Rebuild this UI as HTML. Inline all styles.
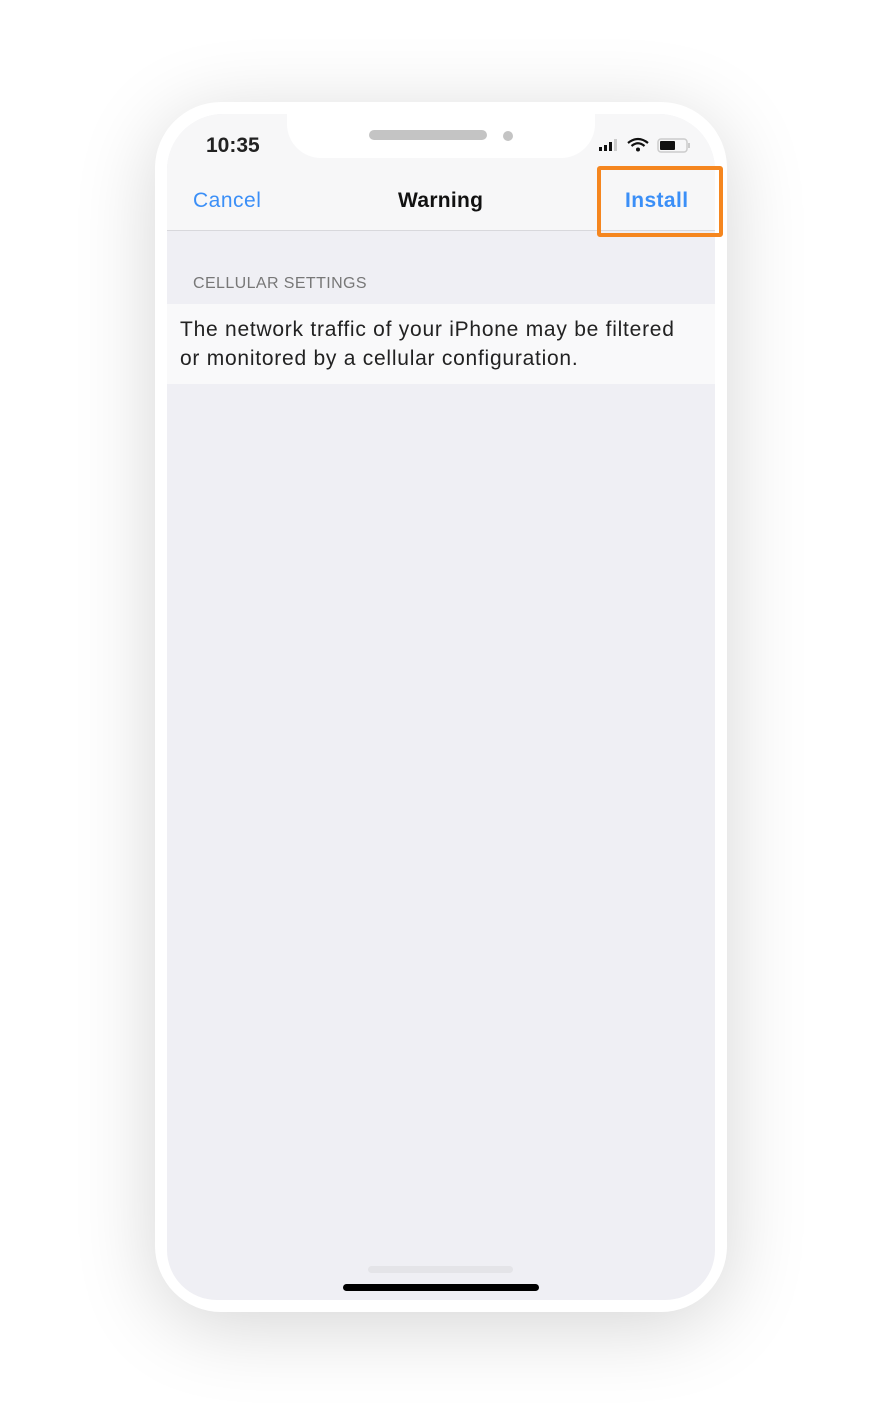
<!DOCTYPE html>
<html><head><style>
body{margin:0;width:882px;height:1410px;background:#fff;position:relative;overflow:hidden;font-family:"Liberation Sans",sans-serif}
.shadow{position:absolute;left:155px;top:102px;width:572px;height:1210px;border-radius:70px;box-shadow:0 14px 80px rgba(0,0,0,0.17)}
.phone{position:absolute;left:155px;top:102px;width:572px;height:1210px;border-radius:66px;background:#fff}
.screen{position:absolute;left:167px;top:114px;width:548px;height:1186px;border-radius:56px 56px 50px 50px;background:#efeff4;overflow:hidden}
.top{position:absolute;left:0;top:0;width:548px;height:116px;background:#f7f7f8;border-bottom:1px solid #d8d8dc}
.notch{position:absolute;left:120px;top:-2px;width:308px;height:46px;background:#fff;border-radius:0 0 34px 34px}
.t{position:absolute;white-space:nowrap}
</style></head><body>
<div class="shadow"></div>
<div class="phone"></div>
<div class="screen">
 <div class="top">
  <div class="notch"></div>
  <div style="position:absolute;left:202px;top:16px;width:118px;height:10px;border-radius:5px;background:#c4c4c4"></div>
  <div style="position:absolute;left:336px;top:17px;width:10px;height:10px;border-radius:5px;background:#c4c4c4"></div>
  <div class="t" style="left:39px;top:20px;font-size:21px;font-weight:bold;color:#222">10:35</div>
  <svg style="position:absolute;left:432px;top:23px" width="96" height="16" viewBox="0 0 96 16">
   <rect x="0" y="10" width="3" height="4" fill="#111"/><rect x="5" y="8" width="3" height="6" fill="#111"/><rect x="10" y="5" width="3" height="9" fill="#111"/><rect x="15" y="2" width="3" height="12" fill="#ccc"/>
   <path d="M29 6 Q39 -2 49 6" stroke="#111" stroke-width="2.2" fill="none"/><path d="M32.5 9 Q39 3.5 45.5 9" stroke="#111" stroke-width="2.2" fill="none"/><circle cx="39" cy="12.5" r="2" fill="#111"/>
   <rect x="59" y="2" width="29" height="13" rx="3" fill="none" stroke="#ccc" stroke-width="1.5"/><rect x="61" y="4" width="15" height="9" rx="1" fill="#111"/><rect x="89" y="6" width="2" height="5" fill="#ccc"/>
  </svg>
  <div class="t" style="left:26px;top:75px;font-size:21px;letter-spacing:0.5px;color:#3b8ff7">Cancel</div>
  <div class="t" style="left:231px;top:75px;font-size:21px;letter-spacing:0.3px;font-weight:bold;color:#111">Warning</div>
  <div class="t" style="left:458px;top:75px;font-size:21px;letter-spacing:0.4px;font-weight:bold;color:#3b8ff7">Install</div>
 </div>
 <div class="t" style="left:26px;top:161px;font-size:16px;letter-spacing:0.4px;color:#777">CELLULAR SETTINGS</div>
 <div style="position:absolute;left:0;top:190px;width:548px;height:80px;background:#f9f9fa">
  <div class="t" style="left:13px;top:11px;font-size:21px;letter-spacing:0.75px;line-height:29px;color:#222">The network traffic of your iPhone may be filtered<br>or monitored by a cellular configuration.</div>
 </div>
 <div style="position:absolute;left:201px;top:1152px;width:145px;height:7px;border-radius:4px;background:#e4e4e8"></div>
 <div style="position:absolute;left:176px;top:1170px;width:196px;height:7px;border-radius:4px;background:#000"></div>
</div>
<div style="position:absolute;left:597px;top:166px;width:118px;height:63px;border:4px solid #f5861f;border-radius:3px"></div>
</body></html>
